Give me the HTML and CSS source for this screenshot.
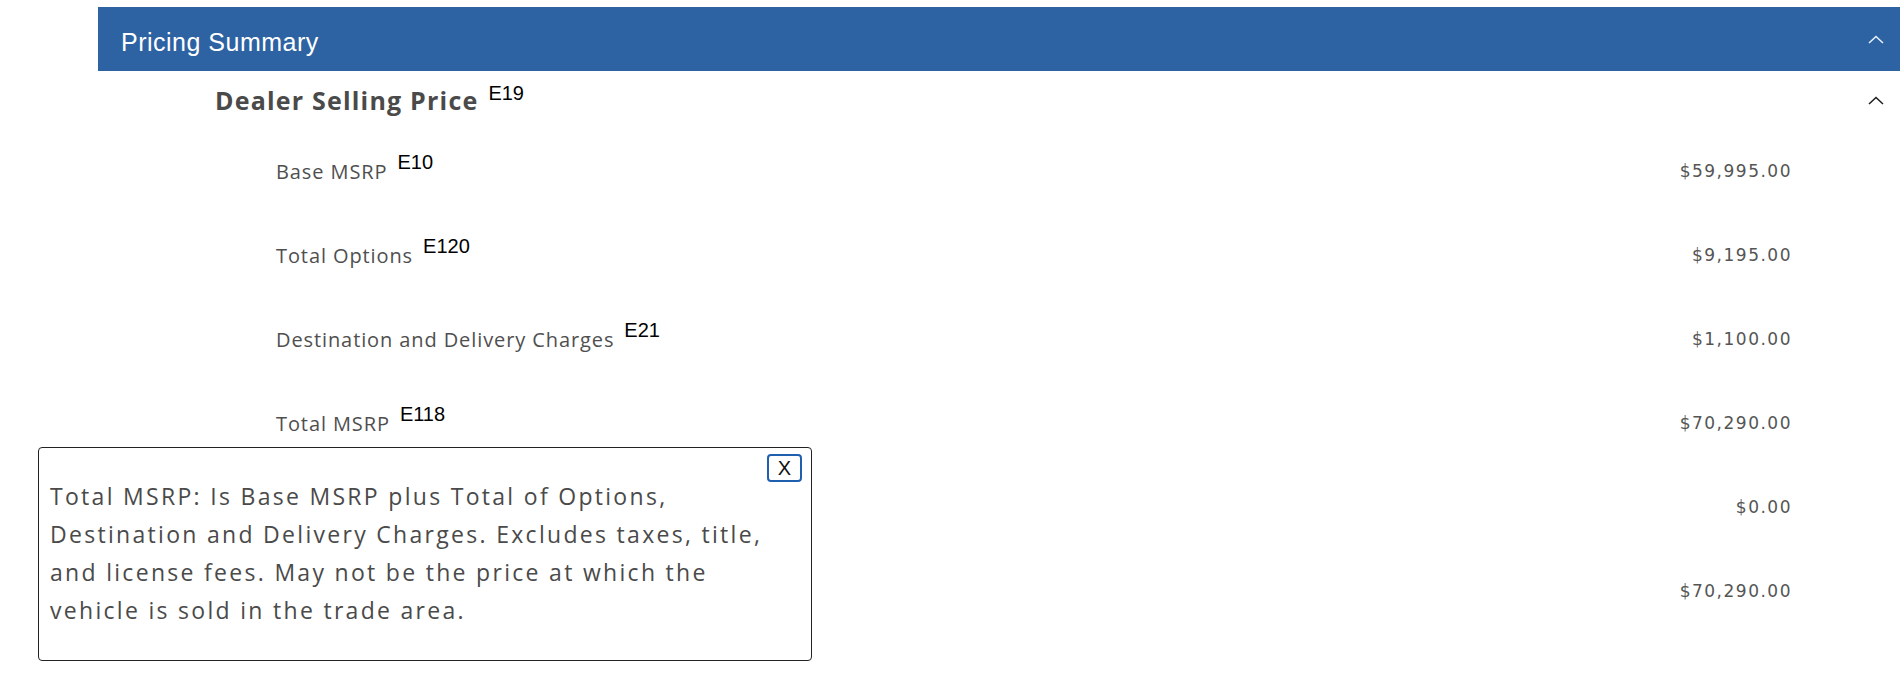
FILE: index.html
```html
<!DOCTYPE html>
<html lang="en">
<head>
    <meta charset="UTF-8">
    <meta name="viewport" content="width=device-width, initial-scale=1.0">
    <title>Pricing Summary</title>
    <link rel="stylesheet" href="styles.css">
</head>
<body>
    <div class="pricing">
        <div class="pricing-bar">
            <span class="bar-title">Pricing Summary</span>
            <svg class="chevron" width="16" height="9" viewBox="0 0 16 9"><path d="M1 8 L8 1.5 L15 8" /></svg>
        </div>
        <div class="section">
            <div class="section-head">
                <h2>Dealer Selling Price<sup>E19</sup></h2>
                <svg class="chevron dark" width="16" height="9" viewBox="0 0 16 9"><path d="M1 8 L8 1.5 L15 8" /></svg>
            </div>
            <ul class="price-list">
                <li class="price-row"><span class="label">Base MSRP<sup>E10</sup></span><span class="amount">$59,995.00</span></li>
                <li class="price-row"><span class="label">Total Options<sup>E120</sup></span><span class="amount">$9,195.00</span></li>
                <li class="price-row"><span class="label">Destination and Delivery Charges<sup>E21</sup></span><span class="amount">$1,100.00</span></li>
                <li class="price-row"><span class="label">Total MSRP<sup>E118</sup></span><span class="amount">$70,290.00</span></li>
                <!-- labels of the last two rows sit under the popup -->
                <li class="price-row"><span class="label"></span><span class="amount">$0.00</span></li>
                <li class="price-row"><span class="label"></span><span class="amount">$70,290.00</span></li>
            </ul>
        </div>
    </div>

    <!-- disclosure popup for Total MSRP -->
    <div class="tooltip">
        <button class="close-btn">X</button>
        <p>Total MSRP: Is Base MSRP plus Total of Options,<br>
        Destination and Delivery Charges. Excludes taxes, title,<br>
        and license fees. May not be the price at which the<br>
        vehicle is sold in the trade area.</p>
    </div>
</body>
</html>
```

FILE: styles.css
```css
body {
    margin: 0;
    background-color: white;
    font-family: "Open Sans", sans-serif;
    color: #4f4f4f;
    overflow: hidden;
}
.pricing {
    margin-top: 7px;
    margin-left: 98px;
}
.pricing-bar {
    display: flex;
    justify-content: space-between;
    align-items: center;
    height: 64px;
    padding: 0 16px 0 23px;
    background-color: #2d63a2;
    color: white;
}
.bar-title {
    font-family: "Liberation Sans", Arial, sans-serif;
    font-size: 25px;
    letter-spacing: 0.5px;
    padding-top: 6px;
}
.chevron path {
    fill: none;
    stroke: #e6f0fb;
    stroke-width: 1.6;
}
.chevron.dark path {
    stroke: #222;
}
.section-head {
    display: flex;
    justify-content: space-between;
    align-items: center;
    height: 58px;
    padding: 0 16px 0 117px;
}
.section-head h2 {
    margin: 0;
    font-size: 25px;
    font-weight: 700;
    letter-spacing: 1.2px;
    color: #4a4a4a;
}
sup {
    font-family: "Liberation Sans", Arial, sans-serif;
    font-size: 20px;
    font-weight: normal;
    letter-spacing: 0;
    color: #000;
    vertical-align: 10px;
    line-height: 0;
    margin-left: 10px;
}
.price-list {
    list-style: none;
    margin: 0;
    padding: 0;
}
.price-row {
    display: flex;
    justify-content: space-between;
    align-items: center;
    height: 84px;
    padding: 0 108px 0 178px;
}
.label {
    font-size: 20px;
    letter-spacing: 0.9px;
    color: #4f4f4f;
}
.amount {
    font-family: "DejaVu Sans", sans-serif;
    font-size: 17px;
    letter-spacing: 1.5px;
    color: #555;
}
.tooltip {
    position: absolute;
    left: 38px;
    top: 447px;
    width: 736px;
    padding: 29px 25px 31px 11px;
    background-color: white;
    border: 1px solid #222;
    border-radius: 4px;
}
.tooltip p {
    margin: 0;
    font-size: 23px;
    line-height: 38px;
    letter-spacing: 2.3px;
    color: #4a4a4a;
    white-space: nowrap;
}
.close-btn {
    position: absolute;
    top: 6px;
    right: 9px;
    width: 35px;
    height: 28px;
    padding: 0;
    background: white;
    border: 2px solid #1f5fb0;
    border-radius: 4px;
    font-family: "Liberation Sans", Arial, sans-serif;
    font-size: 20px;
    color: #111;
    cursor: pointer;
}
```
